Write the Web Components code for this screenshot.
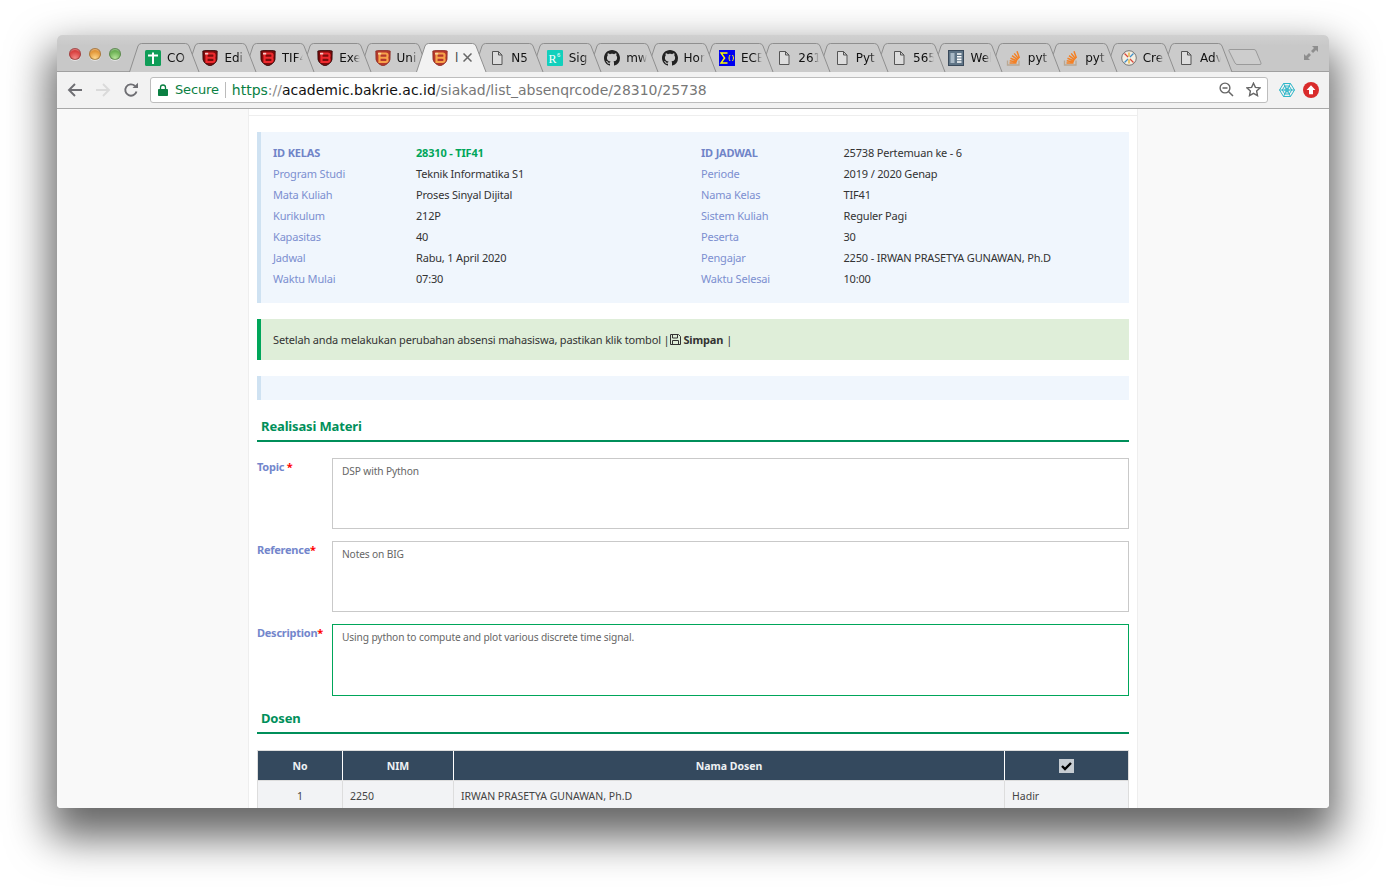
<!DOCTYPE html>
<html lang="id"><head><meta charset="utf-8"><title>Absensi</title>
<style>
html,body{margin:0;height:887px;overflow:hidden;background:#fff}
body{box-sizing:border-box;padding:35px 57px 0;font-family:"Noto Sans","Liberation Sans",sans-serif}
</style></head><body>
<browser-window>
  <browser-tab slot="tabs" label="CO" icon="sheet"></browser-tab>
  <browser-tab slot="tabs" label="Edi" icon="sd"></browser-tab>
  <browser-tab slot="tabs" label="TIF4" icon="sd"></browser-tab>
  <browser-tab slot="tabs" label="Exe" icon="sd"></browser-tab>
  <browser-tab slot="tabs" label="Uni" icon="so2"></browser-tab>
  <browser-tab slot="tabs" label="l" icon="so2" active></browser-tab>
  <browser-tab slot="tabs" label="N5" icon="doc"></browser-tab>
  <browser-tab slot="tabs" label="Sig" icon="r"></browser-tab>
  <browser-tab slot="tabs" label="mw" icon="gh"></browser-tab>
  <browser-tab slot="tabs" label="Hor" icon="gh"></browser-tab>
  <browser-tab slot="tabs" label="ECE" icon="sum"></browser-tab>
  <browser-tab slot="tabs" label="261" icon="doc"></browser-tab>
  <browser-tab slot="tabs" label="Pyt" icon="doc"></browser-tab>
  <browser-tab slot="tabs" label="565" icon="doc"></browser-tab>
  <browser-tab slot="tabs" label="Wel" icon="book"></browser-tab>
  <browser-tab slot="tabs" label="pyt" icon="stack"></browser-tab>
  <browser-tab slot="tabs" label="pyt" icon="stack"></browser-tab>
  <browser-tab slot="tabs" label="Cre" icon="wheel"></browser-tab>
  <browser-tab slot="tabs" label="Adv" icon="doc"></browser-tab>
  <address-bar slot="toolbar"></address-bar>
  <page-card>
    <info-panel>
      <info-item key="ID KELAS" strong accent>28310 - TIF41</info-item>
      <info-item key="ID JADWAL" strong>25738 Pertemuan ke - 6</info-item>
      <info-item key="Program Studi">Teknik Informatika S1</info-item>
      <info-item key="Periode">2019 / 2020 Genap</info-item>
      <info-item key="Mata Kuliah">Proses Sinyal Dijital</info-item>
      <info-item key="Nama Kelas">TIF41</info-item>
      <info-item key="Kurikulum">212P</info-item>
      <info-item key="Sistem Kuliah">Reguler Pagi</info-item>
      <info-item key="Kapasitas">40</info-item>
      <info-item key="Peserta">30</info-item>
      <info-item key="Jadwal">Rabu, 1 April 2020</info-item>
      <info-item key="Pengajar">2250 - IRWAN PRASETYA GUNAWAN, Ph.D</info-item>
      <info-item key="Waktu Mulai">07:30</info-item>
      <info-item key="Waktu Selesai">10:00</info-item>
    </info-panel>
    <notice-box></notice-box>
    <empty-box></empty-box>
    <section-title style="height:42px">Realisasi Materi</section-title>
    <form-row label="Topic" gap value="DSP with Python"></form-row>
    <form-row label="Reference" value="Notes on BIG"></form-row>
    <form-row label="Description" focus value="Using python to compute and plot various discrete time signal."></form-row>
    <section-title style="height:38px">Dosen</section-title>
    <dosen-table></dosen-table>
  </page-card>
</browser-window>
<script>
const GH='M8 0C3.58 0 0 3.58 0 8c0 3.54 2.29 6.53 5.47 7.59.4.07.55-.08.55-.38 0-.19-.01-.82-.01-1.49-2.01.37-2.53-.49-2.69-.94-.09-.23-.48-.94-.82-1.13-.28-.15-.68-.52-.01-.53.63-.01 1.08.58 1.23.82.72 1.21 1.87.87 2.33.66.07-.52.28-.87.51-1.07-1.78-.2-3.64-.89-3.64-3.95 0-.87.31-1.59.82-2.15-.08-.2-.36-1.02.08-2.12 0 0 .67-.21 2.2.82.64-.18 1.32-.27 2-.27.68 0 1.36.09 2 .27 1.53-1.04 2.2-.82 2.2-.82.44 1.1.16 1.92.08 2.12.51.56.82 1.27.82 2.15 0 3.07-1.87 3.75-3.65 3.95.29.25.54.73.54 1.48 0 1.07-.01 1.93-.01 2.2 0 .3.15.46.55.38A8.013 8.013 0 0016 8c0-4.42-3.58-8-8-8z';
const shield=(o,f,b,w)=>`<path d="M.8 1C4 0 12 0 15.200 1L15 9.500C14.500 13 10.500 15 8 16 5.500 15 1.500 13 1 9.500Z" fill="${f}" stroke="${o}" stroke-width=".8"/><path d="M4.500 3.500h6.500a1.500 1.500 0 0 1 1.500 1.500v1.300a1.500 1.500 0 0 1-.8 1.400 1.500 1.500 0 0 1 .8 1.400v1.400a1.500 1.500 0 0 1-1.500 1.500H4.500Z" fill="none" stroke="${b}" stroke-width="2.200"/><path d="M4.500 7.700h7" stroke="${b}" stroke-width="1.900"/><rect x="3" y="2.800" width="3.200" height="1.700" fill="${w}"/>`;
const ICONS={
 sheet:'<rect width="16" height="16" rx="1.500" fill="#0f9d58"/><path d="M3 5.500h10M8 2.500v11.500" stroke="#fff" stroke-width="2" fill="none"/>',
 sd:shield('#2b0505','#7c0c0c','#ee2a2e','#f9c8c8'),
 so2:shield('#8b2d25','#b5382c','#f7a24a','#f6d3a0'),
 doc:'<path d="M3.500 1.500h6l3.500 3.500v9.500h-9.500Z M9.500 1.500v3.500H13" fill="#fff" fill-opacity=".35" stroke="#555" stroke-width="1"/>',
 r:'<rect width="16" height="16" rx="1" fill="#12d0bc"/><text x="1.600" y="13" font-family="Liberation Serif,serif" font-size="12" fill="#fff">R</text><text x="10" y="7" font-family="Liberation Sans,sans-serif" font-size="6" fill="#fff">6</text>',
 gh:`<path fill="#222" d="${GH}"/>`,
 sum:'<rect width="16" height="16" fill="#0000f0"/><path d="M8.500 3H2l3.600 5L2 13h6.500" fill="none" stroke="#ff0" stroke-width="1.400"/><path d="M11 5c-1.300 2-1.300 4 0 6M13.500 5c1.300 2 1.300 4 0 6" fill="none" stroke="#ff0" stroke-width="1"/>',
 book:'<rect x=".5" y=".5" width="15" height="15" fill="#5f7486" stroke="#39495a"/><rect x="2.500" y="3" width="4" height="10" fill="#a9b9c6"/><path d="M9 4h4.500M9 6.700h4.500M9 9.400h4.500M9 12h4.500" stroke="#fff" stroke-width="1.600"/>',
 stack:'<path d="M1.500 10.500v4.500h11.500v-4.500" fill="none" stroke="#b9a894" stroke-width="1.300"/><path d="M3.500 13h7M3.700 10.700l7 1.200M4.500 8.200l6.700 2.800M6 5.700l5.800 4.200M8.200 3.400l4.500 5.600M11 1.200l2.400 6.800" stroke="#f48024" stroke-width="1.500" fill="none"/>',
 wheel:'<circle cx="8" cy="8" r="7.300" fill="#f3eee1" stroke="#777"/><path d="M3.500 3.500l9 9" stroke="#d9483b" stroke-width="1.300"/><path d="M12.500 3.500l-9 9" stroke="#3f8fc9" stroke-width="1.300"/><path d="M8 2.500v11" stroke="#e5b030" stroke-width="1.300"/><circle cx="8" cy="8" r="1.500" fill="#f3eee1"/>'
};
function def(name,css,html,init){
  customElements.define(name,class extends HTMLElement{
    connectedCallback(){
      if(this.shadowRoot)return;
      const s=this.attachShadow({mode:'open'});
      s.innerHTML=`<style>${css}</style>`+(typeof html==='function'?html(this):html);
      if(init)init(this,s);
    }
  });
}
def('browser-window',`
:host{display:flex;flex-direction:column;width:1272px;height:773px;border-radius:5px 5px 4px 4px;overflow:hidden;box-sizing:border-box;box-shadow:0 22px 42px 8px rgba(0,0,0,.6)}
.strip{flex:0 0 37px;box-sizing:border-box;height:37px;background:linear-gradient(#d0d0d0,#c8c8c8 30%);border-bottom:1px solid #a0a0a0;display:flex;align-items:flex-end;position:relative;padding-left:12px}
.lights{display:flex;gap:8px;width:60px;align-self:flex-start;margin-top:13px}
.lights i{width:12px;height:12px;border-radius:50%;display:block;box-shadow:inset 0 0 0 1px rgba(0,0,0,.28),inset 0 2px 1px rgba(255,255,255,.35),0 1px 0 rgba(255,255,255,.5)}
.tabs{display:flex;align-items:flex-end;height:28px;margin-bottom:-1px}
.newtab{width:36px;height:18px;margin:0 0 5px -6px;display:block;flex:none}
.full{margin-left:auto;align-self:flex-start;margin-top:10px;margin-right:10px;flex:none}
.content{flex:1;min-height:0;background:#f9f9f9;overflow:hidden;display:flex;justify-content:center}
`,`<div class="strip"><div class="lights"><i style="background:radial-gradient(circle at 50% 85%,#f58a86,#cf2a2a 75%)"></i><i style="background:radial-gradient(circle at 50% 85%,#ffd78a,#d98420 75%)"></i><i style="background:radial-gradient(circle at 50% 85%,#b7e69a,#55a03f 75%)"></i></div>
<div class="tabs"><slot name="tabs"></slot></div>
<svg class="newtab" viewBox="0 0 36 18"><path d="M1.500 1.500H26q1.500 0 2 1.500l5 12q.5 1.500-1 1.500H9q-1 0-2-1.500L1 3q-.5-1.500.5-1.500Z" fill="#cdcdcd" stroke="#9a9a9a"/></svg>
<svg class="full" width="16" height="16" viewBox="0 0 16 16"><path d="M9 1h6v6l-2-2-3 3-2-2 3-3ZM7 15H1V9l2 2 3-3 2 2-3 3Z" fill="#8e8e8e"/></svg>
</div><slot name="toolbar"></slot><div class="content"><slot></slot></div>`);
let tabZ=40;
def('browser-tab',`
:host{display:block;position:relative;width:72px;height:29px;margin-left:-14.62px;flex:none;font:12px/16px "DejaVu Sans","Liberation Sans",sans-serif;color:#111}
:host(:first-child){margin-left:0}
svg.bg{position:absolute;left:0;top:0}
.in{position:relative;display:flex;align-items:center;height:28px;padding-left:16px;padding-top:1px;box-sizing:border-box}
.ic{width:16px;height:16px;flex:none;display:block}
.t{margin-left:6px;width:28px;white-space:nowrap;-webkit-mask-image:linear-gradient(90deg,#000 50%,transparent 75%);mask-image:linear-gradient(90deg,#000 50%,transparent 75%)}
:host([active]) .t{width:5px;margin-left:7px;color:#444;-webkit-mask-image:none;mask-image:none}
.x{width:9px;height:9px;margin-left:3px;flex:none}
`,h=>{const a=h.hasAttribute('active');const fill=a?'#f2f2f2':'#cbcbcb';
 return `<svg class="bg" width="72" height="29" viewBox="0 0 72 29"><path d="M.5 29L9 3Q10 .5 12.500 .5H56.500Q59 .5 60 3L70 29" fill="${fill}" stroke="#8f8f8f"/></svg>
 <div class="in"><svg class="ic" viewBox="0 0 16 16">${ICONS[h.getAttribute('icon')]}</svg><span class="t">${h.getAttribute('label')}</span>${a?'<svg class="x" viewBox="0 0 9 9"><path d="M.5.500l8 8M8.500.500l-8 8" stroke="#666" stroke-width="1.500"/></svg>':''}</div>`},
 h=>{h.style.zIndex=h.hasAttribute('active')?60:(tabZ--)});
def('address-bar',`
:host{display:flex;align-items:center;height:37px;box-sizing:border-box;background:#f2f2f2;border-bottom:1px solid #a8a8a8;flex:none;font:14px/18px "DejaVu Sans","Liberation Sans",sans-serif}
.nav{display:flex;width:93px;padding-left:10px;box-sizing:border-box;gap:12px;flex:none}
.nav svg{display:block;flex:none}
.box{display:flex;align-items:center;width:1118px;height:26px;box-sizing:border-box;background:#fff;border:1px solid #bdbdbd;border-radius:3px;flex:none;margin-top:-1px}
.lock{margin-left:7px;flex:none;display:block}
.sec{color:#0b8043;margin-left:7px;font-size:13px;letter-spacing:-.15px}
.sep{width:1px;height:16px;background:#bbb;margin:0 6px;flex:none}
.url{color:#777;white-space:nowrap}
.url b{font-weight:400;color:#0b8043}.url i{font-style:normal;color:#888}.url u{text-decoration:none;color:#111}
.end{margin-left:auto;display:flex;gap:12px;padding-right:6px;align-items:center}
.ext{display:flex;gap:8px;margin-left:11px;align-items:center;flex:none}
`,`<div class="nav">
<svg width="16" height="16" viewBox="0 0 16 16"><path d="M15 8H2M8 2L2 8l6 6" fill="none" stroke="#6e6e73" stroke-width="1.900"/></svg>
<svg width="16" height="16" viewBox="0 0 16 16"><path d="M1 8h13M8 2l6 6-6 6" fill="none" stroke="#dadada" stroke-width="1.900"/></svg>
<svg width="16" height="16" viewBox="0 0 16 16"><path d="M13.500 9.500A5.700 5.700 0 1 1 12 4" fill="none" stroke="#6e6e73" stroke-width="1.900"/><path d="M9.500 6H15V.8Z" fill="#6e6e73"/></svg>
</div><div class="box">
<svg class="lock" width="10" height="12" viewBox="0 0 10 12"><path d="M2.500 5V3.500a2.500 2.500 0 0 1 5 0V5" fill="none" stroke="#0b8043" stroke-width="1.300"/><rect y="5" width="10" height="7" rx=".8" fill="#0b8043"/></svg>
<span class="sec">Secure</span><span class="sep"></span>
<span class="url"><b>https</b><i>://</i><u>academic.bakrie.ac.id</u>/siakad/list_absenqrcode/28310/25738</span>
<span class="end">
<svg width="15" height="15" viewBox="0 0 15 15"><circle cx="6" cy="6" r="4.900" fill="none" stroke="#666" stroke-width="1.400"/><path d="M3.500 6h5M9.700 9.700l4.300 4.300" stroke="#666" stroke-width="1.500"/></svg>
<svg width="15" height="15" viewBox="0 0 15 15"><path d="M7.500 1.200l1.900 4.200 4.600.5-3.400 3.100.9 4.600-4-2.300-4 2.300.9-4.600L1 5.900l4.600-.5Z" fill="none" stroke="#666" stroke-width="1.400"/></svg>
</span></div>
<div class="ext">
<svg width="16" height="16" viewBox="0 0 16 16" fill="none" stroke="#2fb7c9" stroke-width="1"><path d="M4.500 1.500h7L15.500 8l-4 6.500h-7L.5 8Z"/><path d="M5.800 4h4.400L12.700 8l-2.500 4H5.800L3.300 8Z"/><path d="M7 6.200h2L10.100 8 9 9.800H7L5.900 8Z"/><path d="M.5 8h15M4.500 1.500l7 13M11.500 1.500l-7 13"/></svg>
<svg width="16" height="16" viewBox="0 0 16 16"><circle cx="8" cy="8" r="8" fill="#d92b2b"/><path d="M8 3.300L12.400 8H10v4.300H6V8H3.600Z" fill="#fff"/></svg>
</div>`);
def('page-card',`
:host{display:block;width:890px;box-sizing:border-box;background:#fff;border-left:1px solid #eee;border-right:1px solid #eee;height:100%;overflow:hidden;padding-top:6px}
.in{border-top:1px solid #eee;padding:16px 8px 0;display:flex;flex-direction:column}
`,`<div class="in"><slot></slot></div>`);
const TXT='font:11px/21px "Noto Sans","Liberation Sans",sans-serif;';
def('info-panel',`
:host{display:grid;grid-template-columns:428px 1fr;height:171px;box-sizing:border-box;background:#f0f6fd;border-left:4px solid #cfe2f2;padding:10px 12px 0;align-content:start;${TXT}}
`,`<slot></slot>`);
def('info-item',`
:host{display:grid;grid-template-columns:143px 1fr;height:21px;white-space:nowrap;color:#333;letter-spacing:-.18px}
:host(:nth-child(even)){grid-template-columns:142.5px 1fr}
.k{color:#7c8fd0}
:host([strong]) .k{font-weight:700;color:#7084c8}
:host([accent]) .v{font-weight:700;color:#00a65a}
`,h=>`<span class="k">${h.getAttribute('key')}</span><span class="v"><slot></slot></span>`);
def('notice-box',`
:host{display:flex;align-items:center;margin-top:16px;height:41px;box-sizing:border-box;background:#dfeed9;border-left:4px solid #00a65a;padding-left:12px;color:#333;${TXT}letter-spacing:-.16px;white-space:nowrap}
svg{margin:0 2px 0 1px;display:block}
span{margin-left:3px}
`,`Setelah anda melakukan perubahan absensi mahasiswa, pastikan klik tombol |<svg width="11" height="11" viewBox="0 0 11 11"><path d="M.5.500h8l2 2v8H.5Z M2.500.500v3.500h5V.500 M2.500 10.500V6.500h6v4" fill="none" stroke="#333"/></svg><b>Simpan</b><span>|</span>`);
def('empty-box',`:host{display:block;margin-top:16px;height:24px;background:#f0f6fd;border-left:4px solid #cfe2f2}`,``);
def('section-title',`
:host{display:flex;align-items:flex-end;box-sizing:border-box;flex:none;padding:0 0 6px 4px;border-bottom:2px solid #008f5a;color:#008f5a;font:700 13px/16px "Noto Sans","Liberation Sans",sans-serif;letter-spacing:-.15px}
`,`<slot></slot>`);
def('form-row',`
:host{display:grid;grid-template-columns:75px 1fr;margin-top:12px;${TXT}}
:host([gap]){margin-top:16px}
.l{font-weight:700;color:#7386cc;line-height:18px;letter-spacing:-.25px}
.l i{font-style:normal;color:#f00;font-weight:700}
.f{height:71px;box-sizing:border-box;border:1px solid #c9c9c9;padding:2px 9px;font-size:10.2px;color:#666;letter-spacing:-.13px}
:host([focus]) .f{height:72px;border-color:#00a65a}
`,h=>`<div class="l">${h.getAttribute('label')}${h.hasAttribute('gap')?' ':''}<i>*</i></div><div class="f">${h.getAttribute('value')}</div>`);
def('dosen-table',`
:host{display:block;margin-top:16px;font:10.5px/21px "Noto Sans","Liberation Sans",sans-serif}
.r{display:grid;grid-template-columns:86px 111px 551px 124px}
.r>*{box-sizing:border-box;border-right:1px solid #ddd;border-bottom:1px solid #ddd;padding-left:7px;padding-top:1px;display:flex;align-items:center}
.r>*:first-child{border-left:1px solid #ddd;justify-content:center;padding-left:0}
.h{border-top:1px solid #ddd;color:#eef1f4;font-weight:700}
.h>*{background:#34495e;height:30px;justify-content:center;padding-left:0;border-right-color:#fff;border-bottom-color:#ddd}
.h>*:last-child{border-right-color:#ddd}
.b>*{background:#f2f3f5;height:30px;color:#444}
svg{display:block}
`,`<div class="r h"><div>No</div><div>NIM</div><div>Nama Dosen</div><div><svg width="15" height="14" viewBox="0 0 15 14"><rect width="15" height="14" fill="#c6ccd2"/><path d="M3 7l3 3 6-6" fill="none" stroke="#000" stroke-width="2.400"/></svg></div></div>
<div class="r b"><div>1</div><div>2250</div><div>IRWAN PRASETYA GUNAWAN, Ph.D</div><div>Hadir</div></div>`);
</script>
</body></html>
